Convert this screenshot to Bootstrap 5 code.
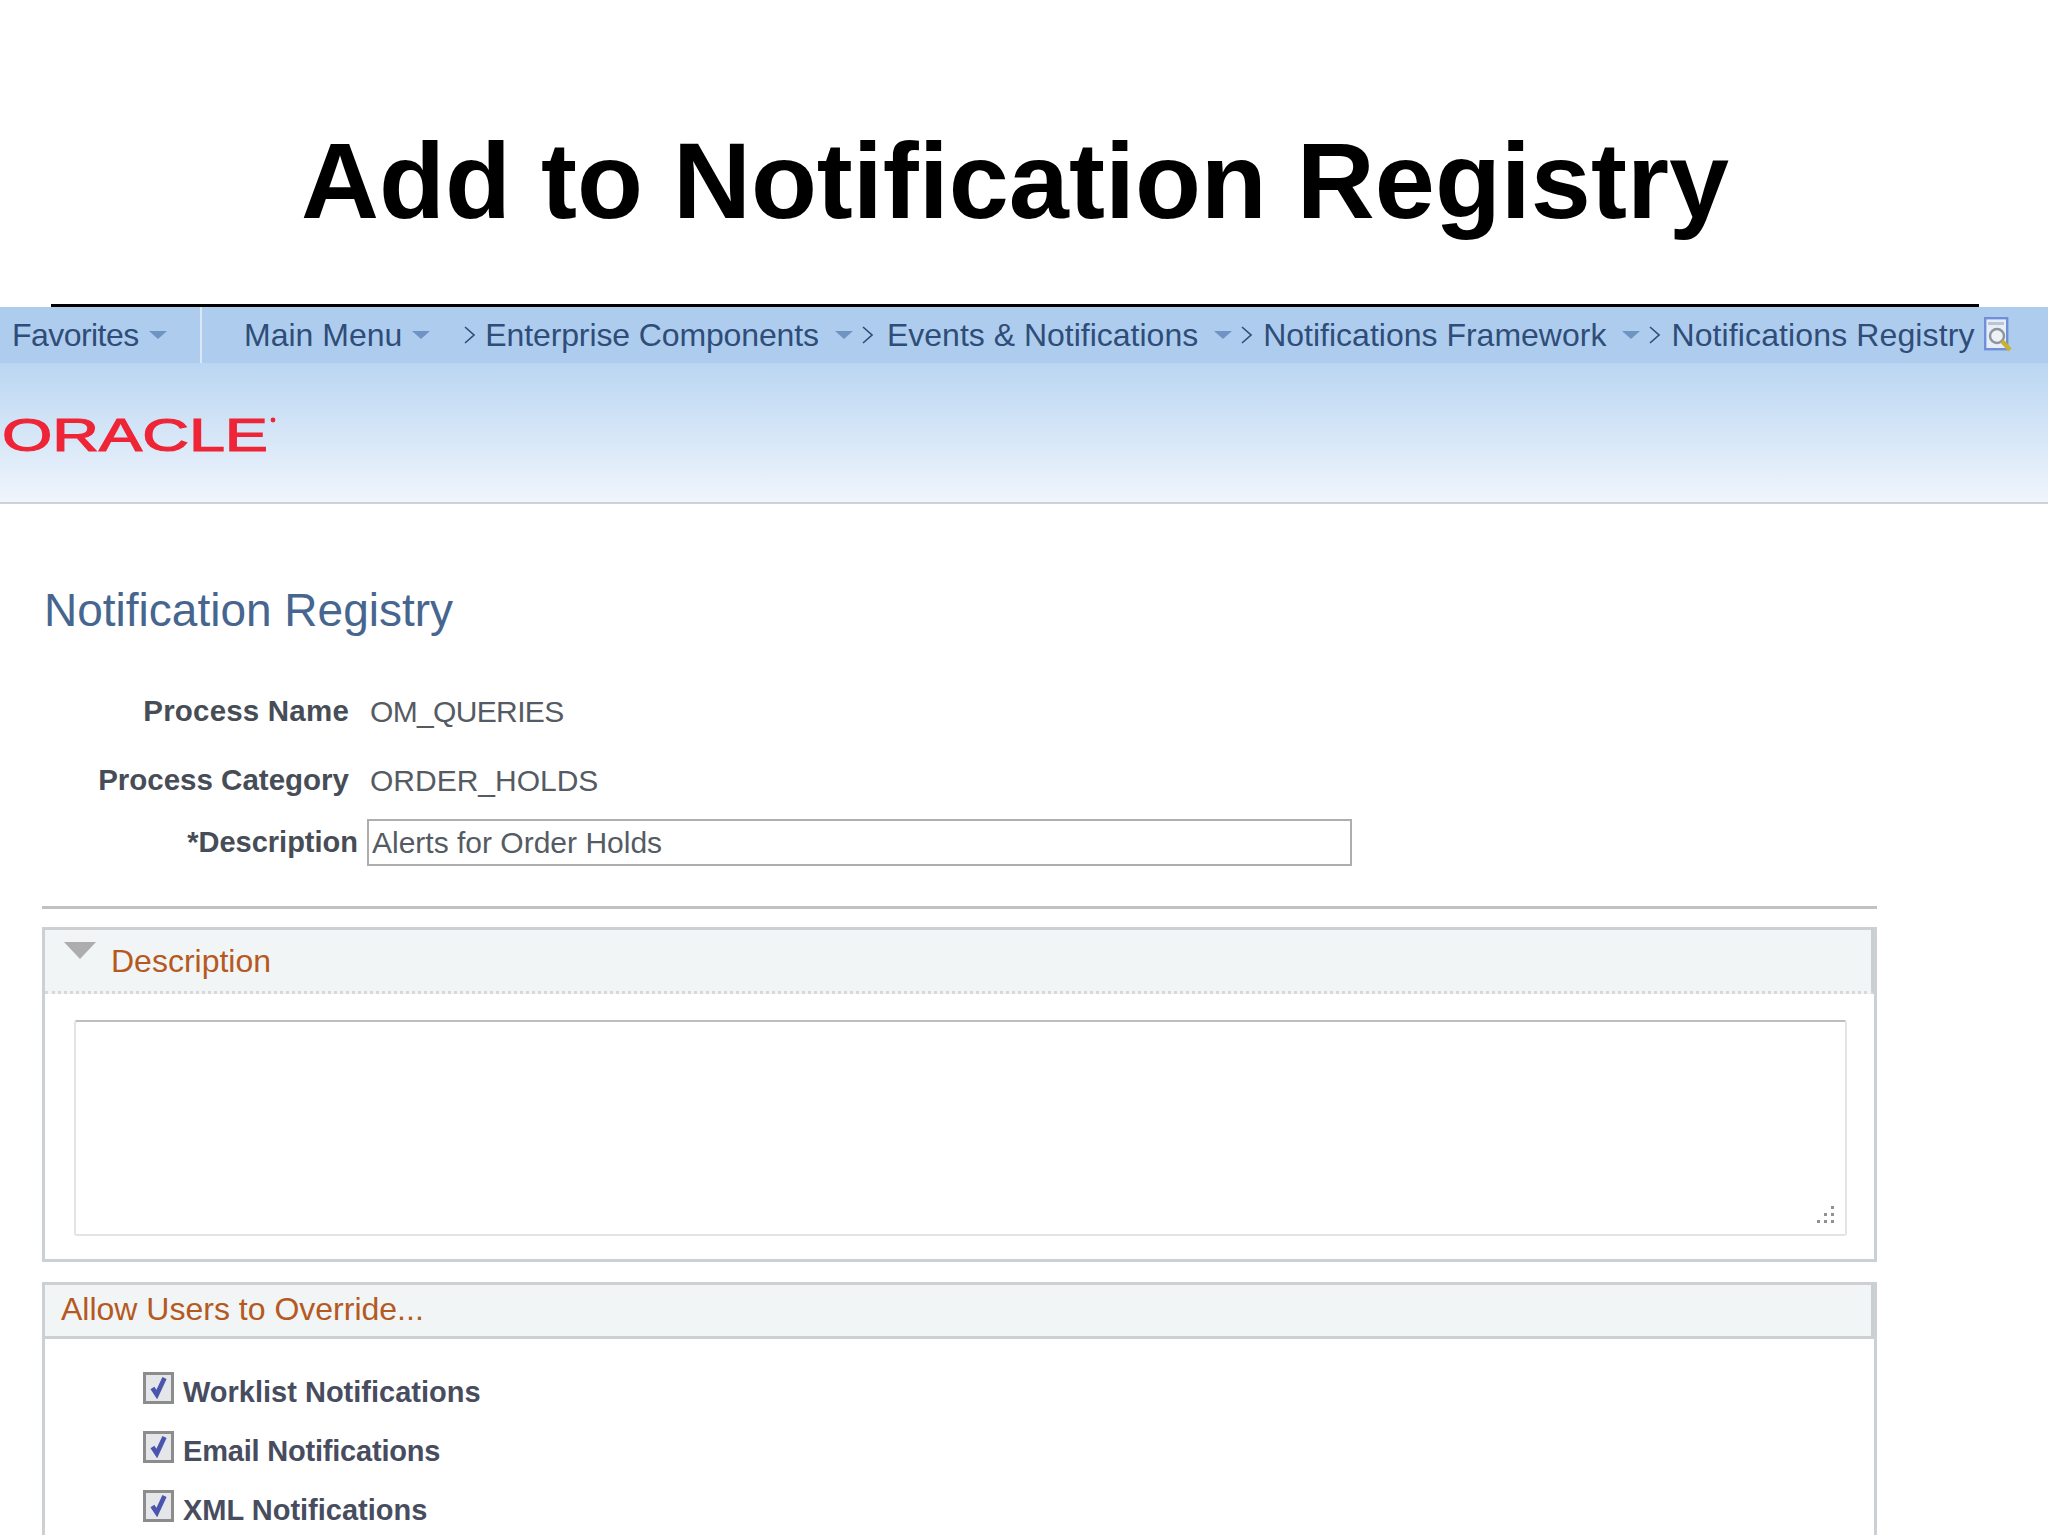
<!DOCTYPE html>
<html lang="en">
<head>
<meta charset="utf-8">
<title>Add to Notification Registry</title>
<link href="https://cdn.jsdelivr.net/npm/bootstrap@5.3.0/dist/css/bootstrap.min.css" rel="stylesheet">
<style>
html,body{height:1536px;overflow:hidden;background:#fff;font-family:"Liberation Sans",Arial,sans-serif;}
.slide-head{margin:0 69px 0 51px;height:307px;border-bottom:3px solid #000;padding-top:127px;}
.slide-title{font:700 108px/1 "Liberation Sans",Arial,sans-serif;color:#000;margin:0;text-align:center;white-space:nowrap;}
.crumbbar{height:56px;background:#aecdee;font-size:32px;color:#2f4d78;white-space:nowrap;}
.fav-cell{width:202px;height:100%;border-right:2px solid #dbe7f5;padding-left:12px;}
.fav-text{letter-spacing:-.55px;}
.ent-text{letter-spacing:-.12px;}
.reg-text{letter-spacing:.12px;}
.crumb-arrow{width:0;height:0;border-left:9px solid transparent;border-right:9px solid transparent;border-top:8px solid #6f94c4;margin-left:10px;flex:none;}
.crumb-arrow.wide{margin-left:16px;}
.crumb-sep{width:11px;height:18px;flex:none;margin:0 11px 0 9px;}
.crumb-sep.first{margin:0 10px 0 34px;}
.crumb-sep.after-ent{margin-right:14px;}
.first-crumb{margin-left:42px;}
.finder{width:29px;height:36px;margin-left:9px;flex:none;}
.brandband{height:141px;background:linear-gradient(#bad6f2,#f0f5fc);border-bottom:2px solid #ccd2dc;padding:53px 0 0 2px;}
.oracle-logo{display:block;width:276px;height:38px;}
.regbody{margin-left:42px;width:1835px;}
.reg-title{font:400 46px/60px "Liberation Sans",Arial,sans-serif;color:#46668f;margin:76px 0 0 2px;}
.facts{margin-top:41px;}
.fact{height:60px;margin-bottom:9px;font-size:30px;color:#555b63;}
.fact-label{width:307px;text-align:right;font-weight:700;color:#474d57;font-size:29.5px;margin-right:21px;flex:none;}
.tight-value{letter-spacing:-.65px;}
.wide-label{letter-spacing:.2px;}
.fact.inputrow{height:47px;margin:0;}
.inputrow .fact-label{width:316px;margin-right:9px;font-size:29px;}
.desc-input{width:985px;height:47px;border:2px solid #aeaeae;border-radius:0;padding:0 3px;font-size:30px;color:#555b63;font-family:inherit;box-shadow:none;}
.rule-line{height:3px;background:#bfc1c3;margin:40px 0 18px;opacity:1;border:0;}
.pane{border:3px solid #cdd0d2;border-radius:0;background:#fff;}
.pane-head{background:#f1f5f6;border:0;border-right:3px solid #c8cfd0;border-radius:0!important;font-size:32px;color:#b5591f;padding:0;display:flex;align-items:center;}
.pane-one{height:335px;}
.pane-one .pane-head{height:64px;border-bottom:3px dotted #d5d9db;padding-left:66px;position:relative;}
.fold-tri{position:absolute;left:19px;top:12px;width:0;height:0;border-left:16px solid transparent;border-right:16px solid transparent;border-top:17px solid #adadad;}
.memo-box{position:relative;margin:26px 27px 0 29px;height:216px;border:2px solid #e2e4e6;border-top-color:#bcbec0;border-radius:3px;background:#fff;}
.grip{position:absolute;right:8px;bottom:8px;width:22px;height:22px;}
.pane-two{margin-top:20px;height:253px;border-bottom:0;}
.pane-two .pane-head{height:55px;border-bottom:3px solid #cdd0d2;padding:0 0 3px 16px;}
.checks{padding:24px 0 0 98px;}
.check-row{height:59px;font-weight:700;font-size:29px;color:#474d5e;}
.check-row.snug{letter-spacing:-.2px;}
.check-row .form-check-input{width:31px;height:32px;margin:0 9px -8px 0;border:3px solid #8c8c8c;border-radius:0;background-color:#e4e6ea;background-size:88%;opacity:1;flex:none;position:relative;top:-9px;
background-image:url("data:image/svg+xml,%3Csvg xmlns='http://www.w3.org/2000/svg' viewBox='0 0 20 20'%3E%3Cpath d='M4 10l4 6 7-15' fill='none' stroke='%234a55ad' stroke-width='4.2'/%3E%3C/svg%3E");}
</style>
</head>
<body>
<div class="slide-head"><h1 class="slide-title">Add to Notification Registry</h1></div>

<nav class="crumbbar d-flex align-items-center">
  <div class="fav-cell d-flex align-items-center"><span class="fav-text">Favorites</span><span class="crumb-arrow"></span></div>
  <span class="first-crumb">Main Menu</span><span class="crumb-arrow"></span>
  <svg class="crumb-sep first" viewBox="0 0 11 18"><path d="M1 1l9 8-9 8" fill="none" stroke="#2f4d78" stroke-width="1.6"/></svg>
  <span class="ent-text">Enterprise Components</span><span class="crumb-arrow wide"></span>
  <svg class="crumb-sep after-ent" viewBox="0 0 11 18"><path d="M1 1l9 8-9 8" fill="none" stroke="#2f4d78" stroke-width="1.6"/></svg>
  <span>Events &amp; Notifications</span><span class="crumb-arrow wide"></span>
  <svg class="crumb-sep" viewBox="0 0 11 18"><path d="M1 1l9 8-9 8" fill="none" stroke="#2f4d78" stroke-width="1.6"/></svg>
  <span>Notifications Framework</span><span class="crumb-arrow wide"></span>
  <svg class="crumb-sep" viewBox="0 0 11 18"><path d="M1 1l9 8-9 8" fill="none" stroke="#2f4d78" stroke-width="1.6"/></svg>
  <span class="reg-text">Notifications Registry</span>
  <svg class="finder" viewBox="0 0 29 36">
    <rect x="1.2" y="1.2" width="22" height="31" fill="#e8eef8" stroke="#6f8fd8" stroke-width="2.4"/>
    <rect x="4" y="5" width="16" height="3" fill="#b9c6d8"/>
    <circle cx="13" cy="19" r="7" fill="#eef2f7" stroke="#8d949c" stroke-width="2.4"/>
    <path d="M18 24l8 9" stroke="#c9b22e" stroke-width="4.4"/>
  </svg>
</nav>

<div class="brandband">
  <svg class="oracle-logo" viewBox="0 0 276 38"><text x="0" y="35" font-family="Liberation Sans" font-size="46" font-weight="400" fill="#ee2536" textLength="266" lengthAdjust="spacingAndGlyphs" stroke="#ee2536" stroke-width="1.2">ORACLE</text><circle cx="271" cy="4" r="2.4" fill="#ee2536"/></svg>
</div>

<main class="regbody">
  <h2 class="reg-title">Notification Registry</h2>
  <div class="facts">
    <div class="fact d-flex align-items-center"><span class="fact-label wide-label">Process Name</span><span class="tight-value">OM_QUERIES</span></div>
    <div class="fact d-flex align-items-center"><span class="fact-label">Process Category</span><span>ORDER_HOLDS</span></div>
    <div class="fact inputrow d-flex align-items-center"><label class="fact-label" for="dsc">*Description</label><input id="dsc" class="form-control desc-input" value="Alerts for Order Holds"></div>
  </div>
  <hr class="rule-line">

  <section class="card pane pane-one">
    <div class="card-header pane-head"><span class="fold-tri"></span>Description</div>
    <div class="memo-box">
      <svg class="grip" viewBox="0 0 22 22" fill="#8f9194"><rect x="16" y="2" width="3" height="3"/><rect x="9" y="9" width="3" height="3"/><rect x="16" y="9" width="3" height="3"/><rect x="2" y="16" width="3" height="3"/><rect x="9" y="16" width="3" height="3"/><rect x="16" y="16" width="3" height="3"/></svg>
    </div>
  </section>

  <section class="card pane pane-two">
    <div class="card-header pane-head">Allow Users to Override...</div>
    <div class="checks">
      <div class="check-row d-flex align-items-center"><input class="form-check-input" type="checkbox" checked><span>Worklist Notifications</span></div>
      <div class="check-row snug d-flex align-items-center"><input class="form-check-input" type="checkbox" checked><span>Email Notifications</span></div>
      <div class="check-row d-flex align-items-center"><input class="form-check-input" type="checkbox" checked><span>XML Notifications</span></div>
    </div>
  </section>
</main>
<script src="https://cdn.jsdelivr.net/npm/bootstrap@5.3.0/dist/js/bootstrap.bundle.min.js"></script>
</body>
</html>
